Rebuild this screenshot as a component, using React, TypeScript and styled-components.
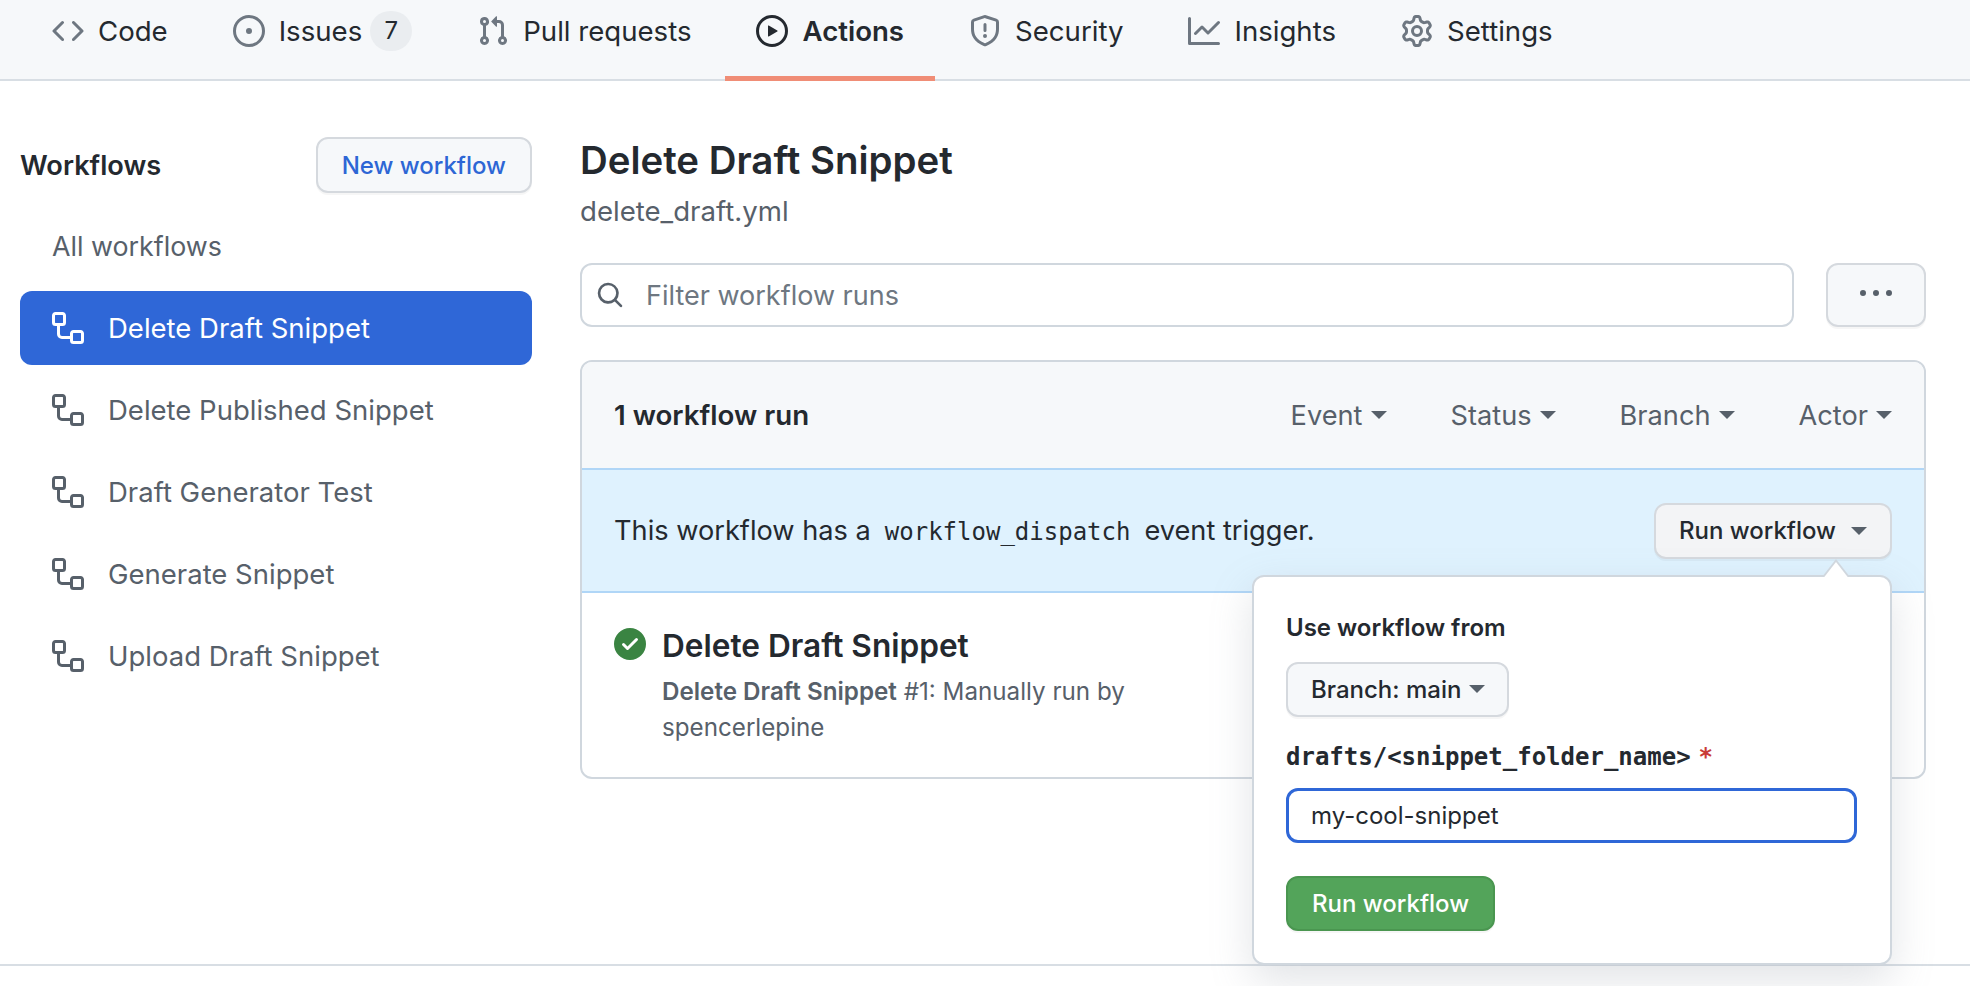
import { ReactNode } from "react";
import styled, { createGlobalStyle } from "styled-components";

const GlobalStyle = createGlobalStyle`
  html, body {
    margin: 0;
    background: #ffffff;
    color: #24292f;
    font-family: Inter, "Noto Sans", "Liberation Sans", sans-serif;
  }
  * {
    box-sizing: border-box;
  }
`;

const Page = styled.div`
  width: 1970px;
  height: 986px;
  overflow: hidden;
  background: #ffffff;
`;

const TabBar = styled.nav`
  display: flex;
  gap: 3px;
  height: 81px;
  padding-left: 21px;
  background: #f6f8fa;
  border-bottom: 2px solid #d8dee4;
`;

const Tab = styled.a<{ $active?: boolean }>`
  display: flex;
  align-items: center;
  gap: 14px;
  height: 81px;
  padding: 0 31px 15px;
  font-size: 27.6px;
  font-weight: ${(p) => (p.$active ? 600 : 400)};
  color: #24292f;
  border-bottom: 5px solid ${(p) => (p.$active ? "#f08d76" : "transparent")};
  svg {
    fill: ${(p) => (p.$active ? "#24292f" : "#6e7781")};
  }
`;

const Counter = styled.span`
  display: flex;
  align-items: center;
  justify-content: center;
  width: 42px;
  height: 40px;
  margin-left: -6px;
  border-radius: 20px;
  background: #eaedf0;
  font-size: 24px;
`;

const Layout = styled.div`
  display: grid;
  grid-template-columns: 512px 1346px;
  column-gap: 48px;
  height: 885px;
  padding: 56px 0 0 20px;
  border-bottom: 2px solid #d8dee4;
`;

const Sidebar = styled.aside`
  display: flex;
  flex-direction: column;
`;

const SidebarHead = styled.div`
  display: flex;
  align-items: center;
  justify-content: space-between;
  margin-bottom: 28px;
`;

const SidebarTitle = styled.h2`
  margin: 0;
  font-size: 27.2px;
  font-weight: 600;
`;

const Button = styled.button<{ $color?: string }>`
  display: inline-flex;
  align-items: center;
  height: 56px;
  padding: 0 24px;
  border: 2px solid #d5d9de;
  border-radius: 12px;
  background: #f6f8fa;
  box-shadow: 0 2px 0 rgba(27, 31, 36, 0.04);
  color: ${(p) => p.$color ?? "#24292f"};
  font-family: inherit;
  font-size: 24px;
  font-weight: 500;
`;

const SideLink = styled.a`
  display: flex;
  align-items: center;
  height: 50px;
  padding-left: 32px;
  margin-bottom: 20px;
  font-size: 26.8px;
  color: #57606a;
`;

const WorkflowItem = styled.a<{ $active?: boolean }>`
  display: flex;
  align-items: center;
  gap: 24px;
  height: 74px;
  padding: 0 32px;
  margin-bottom: 8px;
  border-radius: 12px;
  font-size: 27.5px;
  color: ${(p) => (p.$active ? "#ffffff" : "#57606a")};
  background: ${(p) => (p.$active ? "#2f67d7" : "transparent")};
  svg {
    fill: ${(p) => (p.$active ? "#ffffff" : "#57606a")};
  }
`;

const Main = styled.main`
  display: flex;
  flex-direction: column;
`;

const Title = styled.h1`
  margin: 0;
  font-size: 38.4px;
  line-height: 46px;
  font-weight: 600;
`;

const FileName = styled.div`
  margin-top: 8px;
  font-size: 27.6px;
  line-height: 40px;
  color: #57606a;
`;

const SearchRow = styled.div`
  display: flex;
  gap: 32px;
  margin-top: 32px;
`;

const SearchField = styled.label`
  flex: 1;
  display: flex;
  align-items: center;
  gap: 22px;
  height: 64px;
  padding-left: 14px;
  border: 2px solid #d0d7de;
  border-radius: 12px;
  font-size: 27px;
  color: #6e7781;
  svg {
    fill: #57606a;
  }
`;

const KebabButton = styled.button`
  display: flex;
  align-items: center;
  justify-content: center;
  width: 100px;
  height: 64px;
  padding-bottom: 4px;
  border: 2px solid #d5d9de;
  border-radius: 12px;
  background: #f6f8fa;
  box-shadow: 0 2px 0 rgba(27, 31, 36, 0.04);
  svg {
    fill: #57606a;
  }
`;

const RunBox = styled.section`
  margin-top: 33px;
  border: 2px solid #d0d7de;
  border-radius: 12px;
`;

const BoxHeader = styled.header`
  display: flex;
  align-items: center;
  justify-content: space-between;
  height: 106px;
  padding: 0 32px;
  background: #f6f8fa;
  border-radius: 10px 10px 0 0;
`;

const RunCount = styled.h3`
  margin: 0;
  font-size: 27.7px;
  font-weight: 600;
`;

const Filters = styled.div`
  display: flex;
  gap: 64px;
`;

const Filter = styled.span`
  display: flex;
  align-items: center;
  gap: 8px;
  font-size: 27.2px;
  color: #57606a;
`;

const Caret = styled.i<{ $color?: string }>`
  display: inline-block;
  width: 0;
  height: 0;
  border-top: 8px solid ${(p) => p.$color ?? "#57606a"};
  border-left: 8px solid transparent;
  border-right: 8px solid transparent;
`;

const Banner = styled.div`
  display: flex;
  align-items: center;
  justify-content: space-between;
  height: 125px;
  padding: 0 32px;
  background: #dff2fe;
  border-top: 2px solid #b0d6f7;
  border-bottom: 2px solid #b0d6f7;
  font-size: 27.2px;
`;

const Code = styled.code`
  margin: 0 14px;
  font-family: "DejaVu Sans Mono", "Liberation Mono", monospace;
  font-size: 24px;
`;

const Dropdown = styled.div`
  position: relative;
`;

const RunToggle = styled(Button)`
  gap: 15px;
  padding: 0 23px;
  background: #f3f4f6;
`;

const Popover = styled.div`
  position: absolute;
  top: 72px;
  right: 0;
  z-index: 2;
  display: flex;
  flex-direction: column;
  align-items: flex-start;
  width: 640px;
  height: 390px;
  padding: 27px 32px;
  border: 2px solid #d0d7de;
  border-radius: 12px;
  background: #ffffff;
  box-shadow: 0 16px 40px rgba(140, 149, 159, 0.25);
  &::before,
  &::after {
    content: "";
    position: absolute;
    right: 40px;
    width: 0;
    height: 0;
    border-left: 14px solid transparent;
    border-right: 14px solid transparent;
  }
  &::before {
    top: -18px;
    border-bottom: 18px solid #d0d7de;
  }
  &::after {
    top: -15px;
    border-bottom: 18px solid #ffffff;
  }
`;

const PopoverLabel = styled.div`
  font-size: 24px;
  line-height: 48px;
  font-weight: 600;
`;

const BranchButton = styled(Button)`
  gap: 8px;
  height: 55px;
  margin-top: 10px;
  padding: 0 22px 0 23px;
`;

const FieldLabel = styled.div`
  margin-top: 16px;
  font-family: "DejaVu Sans Mono", "Liberation Mono", monospace;
  font-size: 24px;
  line-height: 48px;
  font-weight: 700;
`;

const Required = styled.span`
  margin-left: 8px;
  color: #c93c37;
`;

const FieldInput = styled.input`
  width: 571px;
  height: 55px;
  margin-top: 7px;
  padding: 0 22px;
  border: 3px solid #2f67d7;
  border-radius: 12px;
  background: #ffffff;
  outline: none;
  color: #24292f;
  font-family: inherit;
  font-size: 24px;
`;

const SubmitButton = styled(Button)`
  height: 55px;
  margin-top: 33px;
  border-color: #4a9650;
  background: #53a45a;
  color: #ffffff;
`;

const RunRow = styled.article`
  display: grid;
  grid-template-columns: 32px 1fr;
  column-gap: 16px;
  height: 184px;
  padding: 33px 32px 0;
  svg {
    fill: #3a8442;
    margin-top: 2px;
  }
`;

const RunTitle = styled.div`
  font-size: 31.6px;
  line-height: 40px;
  font-weight: 600;
`;

const RunMeta = styled.p`
  max-width: 490px;
  margin: 8px 0 0;
  font-size: 24.2px;
  line-height: 36px;
  color: #57606a;
  b {
    font-weight: 600;
  }
`;

function Octicon({ size = 32, children }: { size?: number; children: ReactNode }) {
  return (
    <svg width={size} height={size} viewBox="0 0 16 16" aria-hidden="true">
      {children}
    </svg>
  );
}

const icons = {
  code: "m11.28 3.22 4.25 4.25a.75.75 0 0 1 0 1.06l-4.25 4.25a.749.749 0 0 1-1.275-.326.749.749 0 0 1 .215-.734L13.94 8l-3.72-3.72a.749.749 0 0 1 .326-1.275.749.749 0 0 1 .734.215Zm-6.56 0a.751.751 0 0 1 1.042.018.751.751 0 0 1 .018 1.042L2.06 8l3.72 3.72a.749.749 0 0 1-.326 1.275.749.749 0 0 1-.734-.215L.47 8.53a.75.75 0 0 1 0-1.06Z",
  issue: "M8 9.5a1.5 1.5 0 1 0 0-3 1.5 1.5 0 0 0 0 3Z M8 0a8 8 0 1 1 0 16A8 8 0 0 1 8 0ZM1.5 8a6.5 6.5 0 1 0 13 0 6.5 6.5 0 0 0-13 0Z",
  pull: "M1.5 3.25a2.25 2.25 0 1 1 3 2.122v5.256a2.251 2.251 0 1 1-1.5 0V5.372A2.25 2.25 0 0 1 1.5 3.25Zm5.677-.177L9.573.677A.25.25 0 0 1 10 .854V2.5h1A2.5 2.5 0 0 1 13.5 5v5.628a2.251 2.251 0 1 1-1.5 0V5a1 1 0 0 0-1-1h-1v1.646a.25.25 0 0 1-.427.177L7.177 3.427a.25.25 0 0 1 0-.354ZM3.75 2.5a.75.75 0 1 0 0 1.5.75.75 0 0 0 0-1.5Zm0 9.5a.75.75 0 1 0 0 1.5.75.75 0 0 0 0-1.5Zm8.25.75a.75.75 0 1 0 1.5 0 .75.75 0 0 0-1.5 0Z",
  play: "M8 0a8 8 0 1 1 0 16A8 8 0 0 1 8 0ZM1.5 8a6.5 6.5 0 1 0 13 0 6.5 6.5 0 0 0-13 0Zm4.879-2.773 4.264 2.559a.25.25 0 0 1 0 .428l-4.264 2.559A.25.25 0 0 1 6 10.559V5.442a.25.25 0 0 1 .379-.215Z",
  shield: "M7.467.133a1.748 1.748 0 0 1 1.066 0l5.25 1.68A1.75 1.75 0 0 1 15 3.48V7c0 1.566-.32 3.182-1.303 4.682-.983 1.498-2.585 2.813-5.032 3.855a1.697 1.697 0 0 1-1.33 0c-2.447-1.042-4.049-2.357-5.032-3.855C1.32 10.182 1 8.566 1 7V3.48a1.75 1.75 0 0 1 1.217-1.667Zm.61 1.429a.25.25 0 0 0-.153 0l-5.25 1.68a.25.25 0 0 0-.174.238V7c0 1.358.275 2.666 1.057 3.86.784 1.194 2.121 2.34 4.366 3.297a.196.196 0 0 0 .154 0c2.245-.956 3.582-2.104 4.366-3.298C13.225 9.666 13.5 8.36 13.5 7V3.48a.251.251 0 0 0-.174-.237l-5.25-1.68ZM8.75 4.75v3a.75.75 0 0 1-1.5 0v-3a.75.75 0 0 1 1.5 0ZM9 10.5a1 1 0 1 1-2 0 1 1 0 0 1 2 0Z",
  graph: "M1.5 1.75V13.5h13.75a.75.75 0 0 1 0 1.5H.75a.75.75 0 0 1-.75-.75V1.75a.75.75 0 0 1 1.5 0Zm14.28 2.53-5.25 5.25a.75.75 0 0 1-1.06 0L7 7.06 4.28 9.78a.751.751 0 0 1-1.042-.018.751.751 0 0 1-.018-1.042l3.25-3.25a.75.75 0 0 1 1.06 0L10 7.94l4.72-4.72a.751.751 0 0 1 1.042.018.751.751 0 0 1 .018 1.042Z",
  gear: "M8 0a8.2 8.2 0 0 1 .701.031C9.444.095 9.99.645 10.16 1.29l.288 1.107c.018.066.079.158.212.224.231.114.454.243.668.386.123.082.233.09.299.071l1.103-.303c.644-.176 1.392.021 1.82.63.27.385.506.792.704 1.218.315.675.111 1.422-.364 1.891l-.814.806c-.049.048-.098.147-.088.294.016.257.016.515 0 .772-.01.147.038.246.088.294l.814.806c.475.469.679 1.216.364 1.891a7.977 7.977 0 0 1-.704 1.217c-.428.61-1.176.807-1.82.63l-1.102-.302c-.067-.019-.177-.011-.3.071a5.909 5.909 0 0 1-.668.386c-.133.066-.194.158-.211.224l-.29 1.106c-.168.646-.715 1.196-1.458 1.26a8.006 8.006 0 0 1-1.402 0c-.743-.064-1.289-.614-1.458-1.26l-.289-1.106c-.018-.066-.079-.158-.212-.224a5.738 5.738 0 0 1-.668-.386c-.123-.082-.233-.09-.299-.071l-1.103.303c-.644.176-1.392-.021-1.82-.63a8.12 8.12 0 0 1-.704-1.218c-.315-.675-.111-1.422.363-1.891l.815-.806c.05-.048.098-.147.088-.294a6.214 6.214 0 0 1 0-.772c.01-.147-.038-.246-.088-.294l-.815-.806C.635 6.045.431 5.298.746 4.623a7.92 7.92 0 0 1 .704-1.217c.428-.61 1.176-.807 1.82-.63l1.102.302c.067.019.177.011.3-.071.214-.143.437-.272.668-.386.133-.066.194-.158.211-.224l.29-1.106C6.009.645 6.556.095 7.299.03 7.53.01 7.764 0 8 0Zm-.571 1.525c-.036.003-.108.036-.137.146l-.289 1.105c-.147.561-.549.967-.998 1.189-.173.086-.34.183-.5.29-.417.278-.97.423-1.529.27l-1.103-.303c-.109-.03-.175.016-.195.045-.22.312-.412.644-.573.99-.014.031-.021.11.059.19l.815.806c.411.406.562.957.53 1.456a4.709 4.709 0 0 0 0 .582c.032.499-.119 1.05-.53 1.456l-.815.806c-.081.08-.073.159-.059.19.162.346.353.677.573.989.02.03.085.076.195.046l1.102-.303c.56-.153 1.113-.008 1.53.27.161.107.328.204.501.29.447.222.85.629.997 1.189l.289 1.105c.029.109.101.143.137.146a6.6 6.6 0 0 0 1.142 0c.036-.003.108-.036.137-.146l.289-1.105c.147-.561.549-.967.998-1.189.173-.086.34-.183.5-.29.417-.278.97-.423 1.529-.27l1.103.303c.109.029.175-.016.195-.045.22-.313.411-.644.573-.99.014-.031.021-.11-.059-.19l-.815-.806c-.411-.406-.562-.957-.53-1.456a4.709 4.709 0 0 0 0-.582c-.032-.499.119-1.05.53-1.456l.815-.806c.081-.08.073-.159.059-.19a6.464 6.464 0 0 0-.573-.989c-.02-.03-.085-.076-.195-.046l-1.102.303c-.56.153-1.113.008-1.53-.27a4.44 4.44 0 0 0-.501-.29c-.447-.222-.85-.629-.997-1.189l-.289-1.105c-.029-.11-.101-.143-.137-.146a6.6 6.6 0 0 0-1.142 0ZM11 8a3 3 0 1 1-6 0 3 3 0 0 1 6 0ZM9.5 8a1.5 1.5 0 1 0-3.001.001A1.5 1.5 0 0 0 9.5 8Z",
  workflow: "M0 1.75C0 .784.784 0 1.75 0h3.5C6.216 0 7 .784 7 1.75v3.5A1.75 1.75 0 0 1 5.25 7H4v4a1 1 0 0 0 1 1h4v-1.25C9 9.784 9.784 9 10.75 9h3.5c.966 0 1.75.784 1.75 1.75v3.5A1.75 1.75 0 0 1 14.25 16h-3.5A1.75 1.75 0 0 1 9 14.25v-.75H5A2.5 2.5 0 0 1 2.5 11V7h-.75A1.75 1.75 0 0 1 0 5.25Zm1.75-.25a.25.25 0 0 0-.25.25v3.5c0 .138.112.25.25.25h3.5a.25.25 0 0 0 .25-.25v-3.5a.25.25 0 0 0-.25-.25Zm9 9a.25.25 0 0 0-.25.25v3.5c0 .138.112.25.25.25h3.5a.25.25 0 0 0 .25-.25v-3.5a.25.25 0 0 0-.25-.25Z",
  search: "M10.68 11.74a6 6 0 0 1-7.922-8.982 6 6 0 0 1 8.982 7.922l3.04 3.04a.749.749 0 0 1-.326 1.275.749.749 0 0 1-.734-.215ZM11.5 7a4.499 4.499 0 1 0-8.997 0A4.499 4.499 0 0 0 11.5 7Z",
  kebab: "M8 9a1.5 1.5 0 1 0 0-3 1.5 1.5 0 0 0 0 3ZM1.5 9a1.5 1.5 0 1 0 0-3 1.5 1.5 0 0 0 0 3Zm13 0a1.5 1.5 0 1 0 0-3 1.5 1.5 0 0 0 0 3Z",
  check: "M8 16A8 8 0 1 1 8 0a8 8 0 0 1 0 16Zm3.78-9.72a.751.751 0 0 0-.018-1.042.751.751 0 0 0-1.042-.018L6.75 9.19 5.28 7.72a.751.751 0 0 0-1.042.018.751.751 0 0 0-.018 1.042l2 2a.75.75 0 0 0 1.06 0Z",
};

const tabs = [
  { label: "Code", icon: icons.code },
  { label: "Issues", icon: icons.issue, count: 7 },
  { label: "Pull requests", icon: icons.pull },
  { label: "Actions", icon: icons.play, active: true },
  { label: "Security", icon: icons.shield },
  { label: "Insights", icon: icons.graph },
  { label: "Settings", icon: icons.gear },
];

const workflows = [
  "Delete Draft Snippet",
  "Delete Published Snippet",
  "Draft Generator Test",
  "Generate Snippet",
  "Upload Draft Snippet",
];

const filters = ["Event", "Status", "Branch", "Actor"];

function App() {
  return (
    <Page>
      <GlobalStyle />
      <TabBar>
        {tabs.map((tab) => (
          <Tab key={tab.label} $active={tab.active}>
            <Octicon>
              <path d={tab.icon} fillRule="evenodd" />
            </Octicon>
            {tab.label}
            {tab.count && <Counter>{tab.count}</Counter>}
          </Tab>
        ))}
      </TabBar>
      <Layout>
        <Sidebar>
          <SidebarHead>
            <SidebarTitle>Workflows</SidebarTitle>
            <Button $color="#2d66d5">New workflow</Button>
          </SidebarHead>
          <SideLink>All workflows</SideLink>
          {workflows.map((name, i) => (
            <WorkflowItem key={name} $active={i === 0}>
              <Octicon>
                <path d={icons.workflow} fillRule="evenodd" />
              </Octicon>
              {name}
            </WorkflowItem>
          ))}
        </Sidebar>
        <Main>
          <Title>Delete Draft Snippet</Title>
          <FileName>delete_draft.yml</FileName>
          <SearchRow>
            <SearchField>
              <Octicon size={28}>
                <path d={icons.search} />
              </Octicon>
              Filter workflow runs
            </SearchField>
            <KebabButton>
              <Octicon>
                <path d={icons.kebab} />
              </Octicon>
            </KebabButton>
          </SearchRow>
          <RunBox>
            <BoxHeader>
              <RunCount>1 workflow run</RunCount>
              <Filters>
                {filters.map((f) => (
                  <Filter key={f}>
                    {f}
                    <Caret />
                  </Filter>
                ))}
              </Filters>
            </BoxHeader>
            <Banner>
              <span>
                This workflow has a<Code>workflow_dispatch</Code>event trigger.
              </span>
              <Dropdown>
                <RunToggle>
                  Run workflow
                  <Caret />
                </RunToggle>
                <Popover>
                  <PopoverLabel>Use workflow from</PopoverLabel>
                  <BranchButton>
                    Branch: main
                    <Caret />
                  </BranchButton>
                  <FieldLabel>
                    drafts/&lt;snippet_folder_name&gt;
                    <Required>*</Required>
                  </FieldLabel>
                  <FieldInput defaultValue="my-cool-snippet" />
                  <SubmitButton>Run workflow</SubmitButton>
                </Popover>
              </Dropdown>
            </Banner>
            <RunRow>
              <Octicon>
                <path d={icons.check} />
              </Octicon>
              <div>
                <RunTitle>Delete Draft Snippet</RunTitle>
                <RunMeta>
                  <b>Delete Draft Snippet</b> #1: Manually run by spencerlepine
                </RunMeta>
              </div>
            </RunRow>
          </RunBox>
        </Main>
      </Layout>
    </Page>
  );
}

export default App;
